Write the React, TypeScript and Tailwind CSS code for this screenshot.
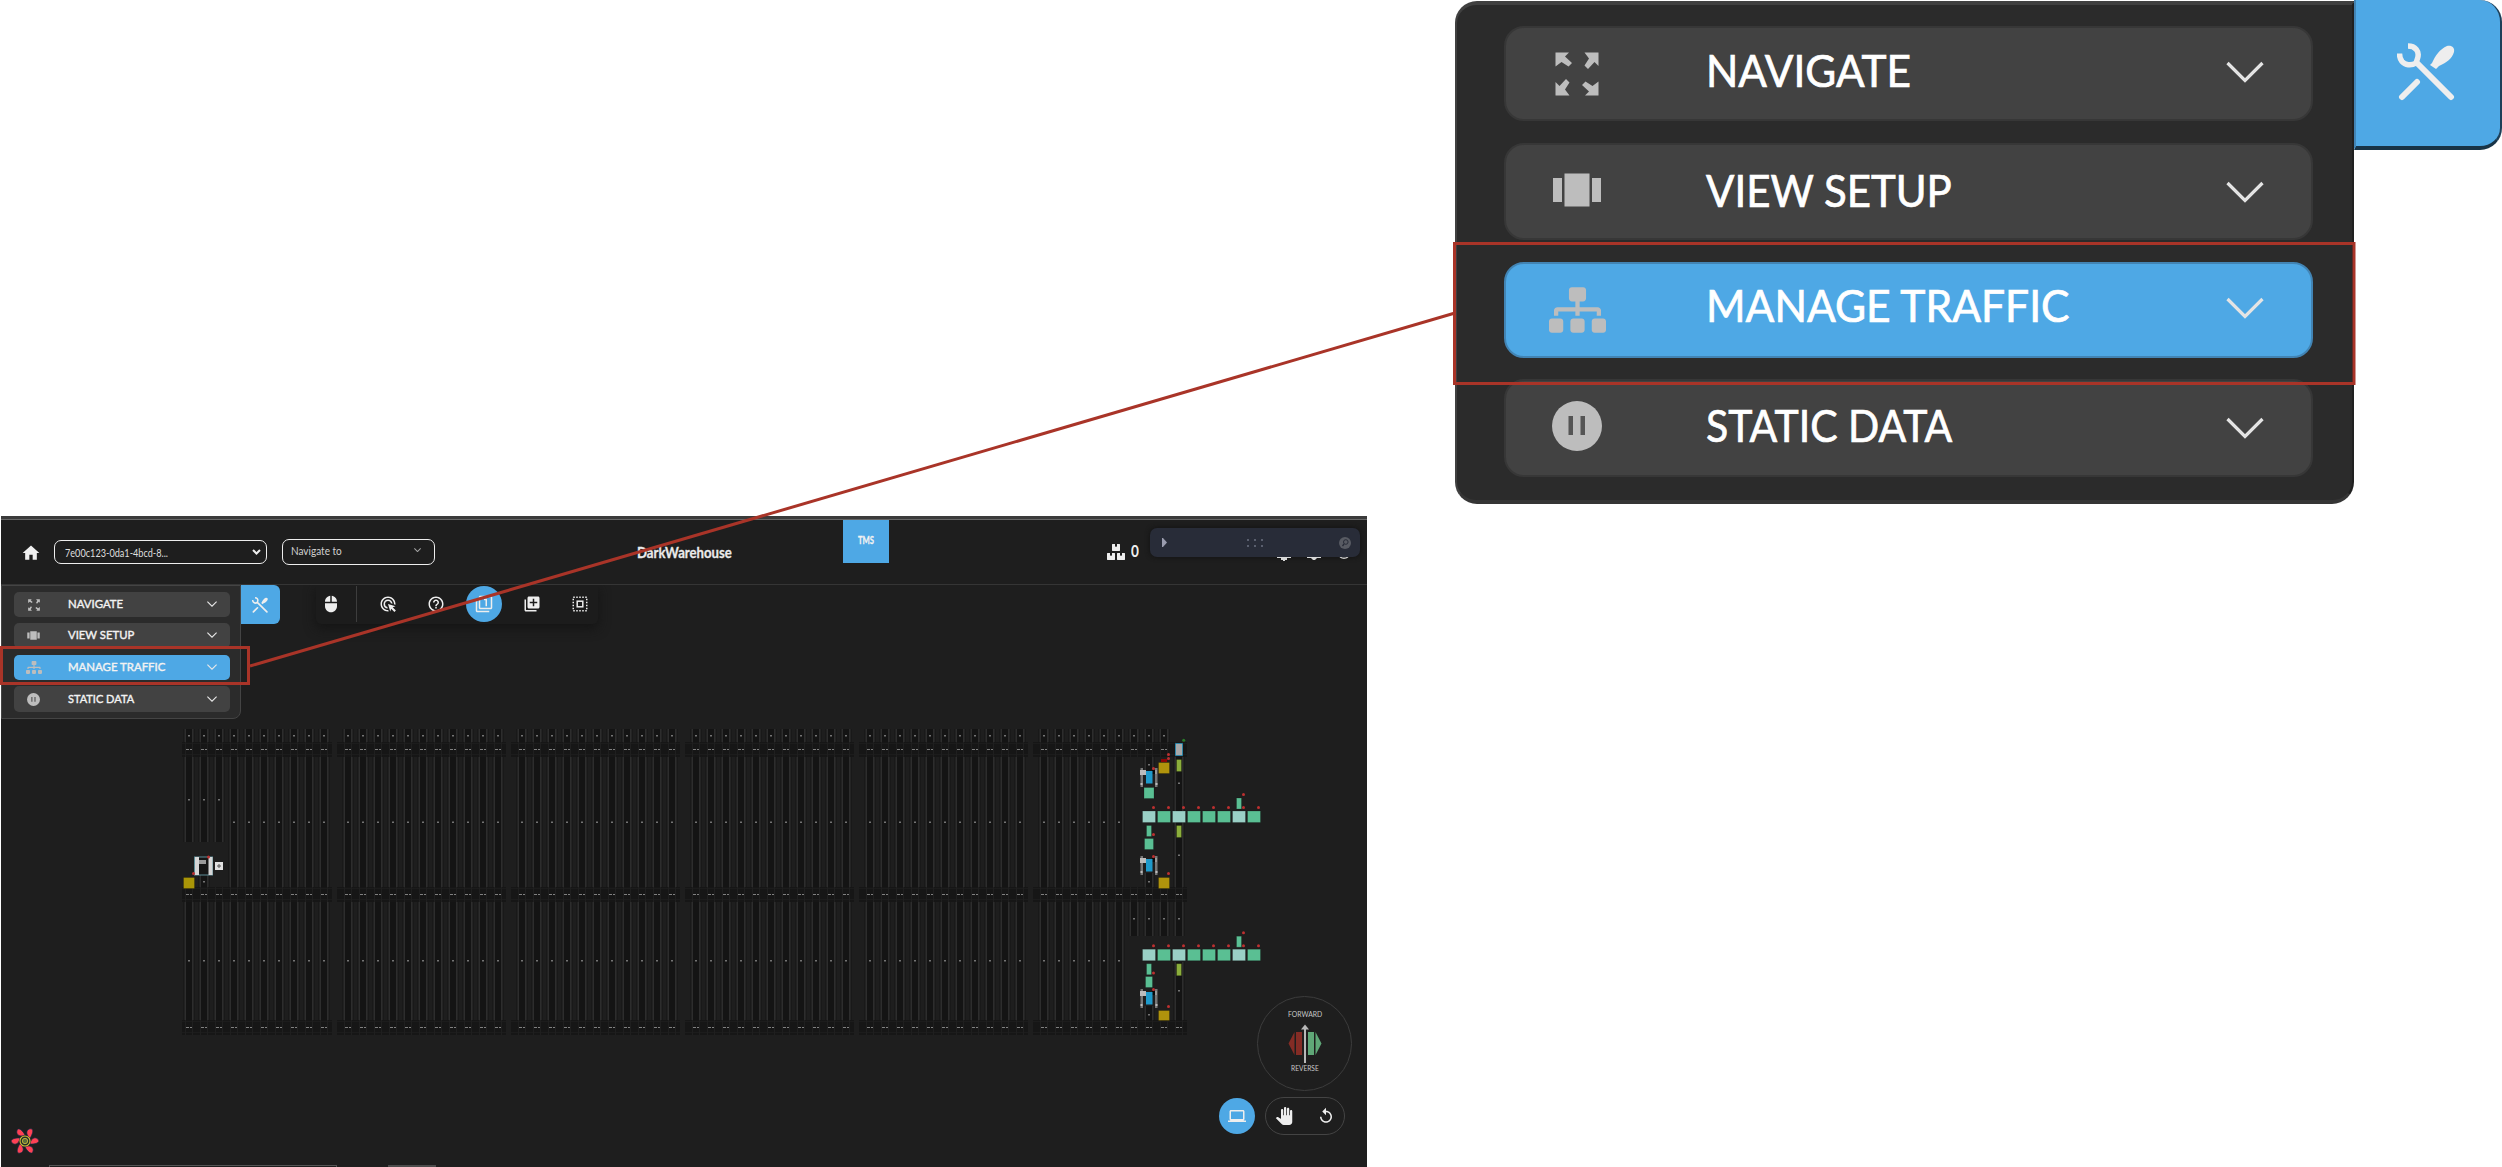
import React, { useLayoutEffect, useRef, useState } from "react";
import {
  MdAdsClick,
  MdHelpOutline,
  MdOutlineFilter1,
  MdLibraryAdd,
  MdMouse,
  MdHome,
  MdLaptop,
  MdPanTool,
  MdReplay,
} from "react-icons/md";
import { FaSitemap, FaBoxes } from "react-icons/fa";

/** Single-line text stretched horizontally to an exact width. */
function Fit({ width, className = "", children }: { width: number; className?: string; children: string }) {
  const ref = useRef<HTMLSpanElement>(null);
  const [scale, setScale] = useState(1);
  useLayoutEffect(() => {
    if (ref.current) setScale(width / ref.current.offsetWidth);
  }, [width]);
  return (
    <span className="flex shrink-0" style={{ width }}>
      <span
        ref={ref}
        className={`inline-block origin-left shrink-0 whitespace-nowrap leading-none ${className}`}
        style={{ transform: `scaleX(${scale})` }}
      >
        {children}
      </span>
    </span>
  );
}

function ExpandIcon({ className }: { className: string }) {
  return (
    <svg viewBox="0 0 44 44" className={className} fill="currentColor">
      {[0, 90, 180, 270].map((a) => (
        <path key={a} transform={`rotate(${a} 22 22)`} d="M0.500 0.500H14L10 4.500l7 6.500-3.500 3.500L6.500 10 0.500 14.500z" />
      ))}
    </svg>
  );
}

function CarouselIcon({ className }: { className: string }) {
  return (
    <svg viewBox="0 0 50 34" className={className} fill="currentColor">
      <path d="M1 5h9v24H1zM12.500 0.500h25v33h-25zM40 5h9v24h-9z" />
    </svg>
  );
}

function PauseIcon({ className }: { className: string }) {
  return (
    <svg viewBox="0 0 50 50" className={className}>
      <circle cx="25" cy="25" r="25" fill="currentColor" />
      <path d="M16.500 15h4.500v19h-4.500zM28.500 15H33v19h-4.500z" fill="#555555" />
    </svg>
  );
}

function ToolsIcon({ className }: { className: string }) {
  return (
    <svg viewBox="0 0 58 58" className={className} fill="none" stroke="currentColor" strokeLinecap="round">
      <path strokeWidth="6" d="M21 21L54 54M5 54L20 39" />
      <path strokeWidth="5.500" strokeLinecap="butt" strokeLinejoin="round" d="M11 3c7 0 12 5 9.500 12.500L19 20c-5 3-11 2-14-1.500-2-2.500-2.500-4-2.500-8" />
      <path fill="currentColor" stroke="none" d="M35 20c3-7 8-14 15-17 5-1 8 2 7 6-2 7-8 11-15 14l-3 3-6-4z" />
    </svg>
  );
}

/** Dashed selection square around a solid frame. */
function SelectIcon({ className }: { className: string }) {
  return (
    <svg viewBox="0 0 18 18" className={className} fill="none" stroke="currentColor">
      <rect x="2.250" y="2.250" width="13.500" height="13.500" strokeWidth="1.500" strokeDasharray="1.500 1.500" />
      <rect x="6.200" y="6.200" width="5.600" height="5.600" strokeWidth="1.500" />
    </svg>
  );
}

function Chevron({ className }: { className: string }) {
  return (
    <svg viewBox="0 0 38 22" className={className} fill="none" stroke="currentColor">
      <path vectorEffect="non-scaling-stroke" strokeWidth="1.100" d="M1.500 2L19 19.500L36.500 2" />
    </svg>
  );
}

function LargeChevron({ className }: { className: string }) {
  return (
    <svg viewBox="0 0 38 22" className={className} fill="none" stroke="currentColor" strokeWidth="3.200">
      <path d="M1.500 2L19 19.500L36.500 2" />
    </svg>
  );
}

type Item = { label: string; icon: "expand" | "carousel" | "sitemap" | "pause"; small: number; large: number; active?: boolean };
const items: Item[] = [
  { label: "NAVIGATE", icon: "expand", small: 55, large: 205 },
  { label: "VIEW SETUP", icon: "carousel", small: 66, large: 246 },
  { label: "MANAGE TRAFFIC", icon: "sitemap", small: 97, large: 364, active: true },
  { label: "STATIC DATA", icon: "pause", small: 66, large: 246 },
];

function ItemIcon({ icon, large }: { icon: Item["icon"]; large: boolean }) {
  if (icon === "expand") return <ExpandIcon className={large ? "size-[44px]" : "size-[12px]"} />;
  if (icon === "carousel") return <CarouselIcon className={large ? "mb-[4px] h-[34px] w-[50px]" : "h-[9px] w-[13px]"} />;
  if (icon === "sitemap") return <FaSitemap className={large ? "h-[48px] w-[57px]" : "h-[13px] w-[16px]"} />;
  return <PauseIcon className={large ? "mb-[4px] size-[50px]" : "size-[13px]"} />;
}

const largeHeights = ["h-[95px] mb-[22px]", "h-[97px] mb-[22px]", "h-[96px] mb-[21px]", "h-[98px]"];
const largeText = ["-mt-[8px]", "-mt-[4px]", "-mt-[10px]", "-mt-[6px]"];
const largeChevron = ["-mt-[4px]", "mt-0", "-mt-[5px]", "-mt-px"];

function LargeMenu() {
  return (
    <div className="flex h-[516px] items-start justify-end">
      <nav className="mt-px flex h-[503px] w-[899px] flex-col rounded-[22px] rounded-tr-none border-t-4 border-r-2 border-b-4 border-l-2 border-t-[#404040] border-r-[#202020] border-b-[#353535] border-l-[#404040] bg-[#2b2b2b] pt-[21px] pl-[47px]">
        {items.map((it, i) => (
          <div
            key={it.label}
            className={`flex w-[809px] shrink-0 items-center rounded-[20px] border-2 ${largeHeights[i]} ${
              it.active ? "border-[#4284b4] bg-[#4ea8e5]" : "border-[#373737] bg-[#424242]"
            }`}
          >
            <span className="ml-[41px] flex w-[60px] justify-center text-[#bdbdbd]">
              <ItemIcon icon={it.icon} large />
            </span>
            <span className={`ml-[99px] flex ${largeText[i]}`}>
              <Fit width={it.large} className="text-[44px] text-white [-webkit-text-stroke:0.700px_white]">
                {it.label}
              </Fit>
            </span>
            <LargeChevron className={`mr-[47px] ml-auto h-[22px] w-[38px] text-[#e4e4e4] ${largeChevron[i]}`} />
          </div>
        ))}
      </nav>
      <button className="flex h-[150px] w-[148px] items-center justify-center rounded-r-[22px] border-r-2 border-b-[4px] border-l-2 border-r-[#1d3f58] border-b-[#183447] border-l-[#4284b4] bg-[#4ea8e5] pr-[5px] pb-[2px] text-[#eeeeee]">
        <ToolsIcon className="size-[58px]" />
      </button>
    </div>
  );
}

const smallGaps = ["h-[25px] mb-[6px]", "h-[25px] mb-[7px]", "h-[25px] mb-[6px]", "h-[26px]"];

function SmallMenu() {
  return (
    <nav className="flex h-[134px] w-[240px] flex-col rounded-br-[8px] border border-[#444444] bg-[#2b2b2b] pt-[6px] pl-[12px]">
      {items.map((it, i) => (
        <div
          key={it.label}
          className={`flex w-[216px] shrink-0 items-center rounded-[5px] ${smallGaps[i]} ${it.active ? "bg-[#4ea8e5]" : "bg-[#424242]"}`}
        >
          <span className="ml-[11px] flex w-[17px] justify-center text-[#bdbdbd]">
            <ItemIcon icon={it.icon} large={false} />
          </span>
          <span className="ml-[26px] flex pb-[0.500px]">
            <Fit width={it.small} className="text-[12px] text-[#f2f2f2] [-webkit-text-stroke:0.400px_#f2f2f2]">
              {it.label}
            </Fit>
          </span>
          <Chevron className="mr-[13px] mb-px ml-auto h-[6px] w-[10px] text-[#e8e8e8]" />
        </div>
      ))}
    </nav>
  );
}

function Header() {
  return (
    <header className="flex h-[69px] items-start border-t-[3px] border-b border-t-[#3b3b3b] border-b-[#353535] shadow-[inset_0_1px_#666666]">
      <MdHome className="mt-[23px] ml-[20px] h-[22px] w-[20px] text-[#f0f0f0]" />
      <div className="mt-[21px] ml-[13px] flex h-[24px] w-[213px] items-center rounded-[7px] border border-[#eeeeee] pr-[5px] pl-[10px]">
        <Fit width={103} className="text-[11px] text-[#dedede]">
          7e00c123-0da1-4bcd-8...
        </Fit>
        <svg viewBox="0 0 9 6" className="ml-auto h-[6px] w-[9px]" fill="none" stroke="#eeeeee" strokeWidth="2">
          <path d="M1 1l3.500 3.500L8 1" />
        </svg>
      </div>
      <div className="mt-[20px] ml-[15px] flex h-[26px] w-[153px] items-center rounded-[7px] border border-[#eeeeee] pr-[13px] pb-[4px] pl-[8px]">
        <Fit width={51} className="text-[11px] text-[#d0d0d0]">
          Navigate to
        </Fit>
        <Chevron className="ml-auto h-[4px] w-[7px] text-[#a5a5a5]" />
      </div>
      <span className="mt-[26px] ml-[202px] flex">
        <Fit width={95} className="text-[15.500px] font-bold text-[#eaeaea] [-webkit-text-stroke:0.300px_#eaeaea]">
          DarkWarehouse
        </Fit>
      </span>
      <div className="mt-px ml-[111px] flex h-[43px] w-[46px] items-center justify-center bg-[#4ea8e5] pb-[3px]">
        <Fit width={16} className="text-[12px] font-bold text-[#f2f2f2] [-webkit-text-stroke:0.300px_#f2f2f2]">
          TMS
        </Fit>
      </div>
      <FaBoxes className="mt-[25px] ml-[218px] h-[16px] w-[18px] text-[#eeeeee]" />
      <span className="mt-[23px] ml-[6px] flex">
        <Fit width={8} className="text-[17px] font-bold text-[#eeeeee]">
          0
        </Fit>
      </span>
      <div className="mt-[9px] ml-[11px] flex w-[210px] flex-col">
        <div className="flex h-[29px] items-center rounded-[7px] bg-[#282c38] shadow-[0_0_5px_#111111]">
          <svg viewBox="0 0 5 9" className="ml-[12px] h-[9px] w-[5px]" fill="#9a9cae">
            <path d="M0 0h1l4 4.500L1 9H0z" />
          </svg>
          <div className="ml-[80px] grid grid-cols-3 gap-x-[5px] gap-y-[4px]">
            {[0, 1, 2, 3, 4, 5].map((n) => (
              <span key={n} className="size-[2px] bg-[#5a5f6e]" />
            ))}
          </div>
          <svg viewBox="0 0 12 12" className="mr-[9px] ml-auto size-[12px]">
            <circle cx="6" cy="6" r="6" fill="#585b63" />
            <circle cx="6.800" cy="5" r="2.300" fill="none" stroke="#282c38" />
            <path d="M5 7L3.500 9" stroke="#282c38" strokeWidth="1.300" />
          </svg>
        </div>
        <svg viewBox="0 0 210 4" className="h-[4px] w-[210px]" fill="#d8d8d8">
          <path d="M127 0h14v1h-14zM131 1h6v2h-2v1h-2V3h-2zM157 0h14v1h-14zM161 1h6l-2 2h-2z" />
          <path d="M190 0q4 2.500 8 0" fill="none" stroke="#cccccc" strokeWidth="1.400" />
        </svg>
      </div>
    </header>
  );
}

const groups = [
  { x: 189, n: 10, l: 182, r: 332 },
  { x: 348, n: 11, l: 337, r: 506 },
  { x: 522, n: 11, l: 511, r: 680 },
  { x: 696, n: 11, l: 685, r: 854 },
  { x: 870, n: 11, l: 859, r: 1028 },
  { x: 1044, n: 10, l: 1033, r: 1187 },
];

function Rail({ x, y, to, dots = [] }: { x: number; y: number; to: number; dots?: number[] }) {
  return (
    <g>
      <rect x={x - 6} y={y} width="12" height={to - y} fill="#191919" />
      <rect x={x - 4.5} y={y} width="1.600" height={to - y} fill="#2d2d2d" />
      <rect x={x + 3} y={y} width="1.600" height={to - y} fill="#2d2d2d" />
      <rect x={x - 2.9} y={y} width="5.900" height={to - y} fill="#141414" />
      {dots.map((d) => (
        <rect key={d} x={x - 1} y={d - 1} width="2" height="1.500" fill="#747474" />
      ))}
    </g>
  );
}

function Red({ x, y }: { x: number; y: number }) {
  return <circle cx={x} cy={y} r="1.500" fill="#bd3030" />;
}

function Box({ x, y, w, h = 12, c }: { x: number; y: number; w: number; h?: number; c: string }) {
  return <rect x={x + 0.5} y={y + 0.5} width={w - 1} height={h - 1} fill={c} stroke="#000000" strokeOpacity="0.200" />;
}

function Crane({ y }: { y: number }) {
  return (
    <g>
      <rect x="1140.500" y={y} width="2.500" height="19" fill="#777777" />
      <rect x="1155" y={y} width="2.500" height="19" fill="#777777" />
      <rect x="1140" y={y + 2} width="6" height="5" fill="#bcbcbc" />
      <rect x="1140.500" y={y + 15} width="2" height="2" fill="#bcbcbc" />
      <rect x="1155.500" y={y + 15} width="2" height="2" fill="#bcbcbc" />
      <rect x="1152" y={y + 2} width="5" height="4" fill="#080808" />
      <rect x="1155" y={y + 2} width="2" height="4" fill="#999999" />
      <rect x="1146" y={y + 3} width="6.500" height="12.500" fill="#1e9acb" />
      <Red x={1153.5} y={y + 0.5} />
    </g>
  );
}

function Conveyor({ y }: { y: number }) {
  return (
    <g>
      {[0, 1, 2, 3, 4, 5, 6, 7].map((i) => (
        <g key={i}>
          <Box x={1142 + 15 * i} y={y} w={14} h={12.5} c={i === 0 || i === 2 || i === 6 ? "#9ad0c6" : "#5abf93"} />
          <Red x={1153.5 + 15 * i} y={y - 3} />
        </g>
      ))}
      <Box x={1236} y={y - 13} w={6} c="#5abf93" />
      <Red x={1243.5} y={y - 16} />
      <Box x={1146} y={y + 14.5} w={6} c="#5abf93" />
      <Box x={1176} y={y + 14.5} w={6} h={13} c="#8bae3b" />
    </g>
  );
}

function WarehouseMap() {
  return (
    <svg viewBox="1 585 1366 582" className="absolute inset-0 h-[582px] w-[1366px]">
      {groups.map((g, gi) => (
        <g key={g.x}>
          {Array.from({ length: g.n }, (_, i) => {
            const x = g.x + 15 * i;
            if (gi === 5 && i > 5)
              return (
                <g key={x}>
                  {i < 9 && <Rail x={x} y={729} to={742} dots={[736]} />}
                  <Rail x={x} y={902} to={936} dots={[919]} />
                </g>
              );
            const cut = gi === 0 && i < 3;
            return (
              <g key={x}>
                <Rail x={x} y={729} to={742} dots={[736]} />
                <Rail x={x} y={757} to={cut ? 842 : 887} dots={[cut ? 800 : 822.5]} />
                <Rail x={x} y={902} to={1020} dots={[961]} />
              </g>
            );
          })}
          {[742, 887, 1020].map((y) => (
            <g key={y}>
              <rect x={g.l} y={y} width={g.r - g.l} height="15" fill="#161616" />
              <rect x={g.l} y={y + 1} width={g.r - g.l} height="1" fill="#1c1c1c" />
              <rect x={g.l} y={y + 12} width={g.r - g.l} height="1" fill="#1c1c1c" />
              {Array.from({ length: g.n }, (_, i) => {
                const x = g.x + 15 * i;
                return (
                  <g key={x}>
                    <path d={`M${x - 3.5} ${y}v15M${x + 3.5} ${y}v15`} stroke="#1f1f1f" />
                    <path d={`M${x - 3} ${y + 7.5}h3M${x + 1} ${y + 7.5}h2`} stroke="#808080" />
                  </g>
                );
              })}
            </g>
          ))}
        </g>
      ))}
      <Rail x={204} y={875} to={887} dots={[882]} />
      <Rail x={1179} y={757} to={887} dots={[783.5, 855.5]} />
      <Rail x={1179} y={962} to={1020} dots={[991]} />
      <Rail x={1149} y={757} to={771} dots={[765]} />
      <Rail x={1149} y={873} to={887} dots={[882]} />
      <Rail x={1149} y={1006} to={1020} dots={[1015]} />

      <rect x="194.500" y="857" width="18" height="18" fill="#161616" stroke="#5c8c96" />
      <rect x="195" y="857" width="4" height="18" fill="#d6d6d6" />
      <rect x="208.500" y="857" width="4" height="18" fill="#d6d6d6" />
      <rect x="199" y="860" width="7" height="4" fill="#9a9a9a" />
      <Red x={208.5} y={857} />
      <Red x={193.5} y={873.5} />
      <rect x="215" y="862" width="8" height="8" fill="#e2e2e2" />
      <path d="M219 864v4M217 866h4" stroke="#555555" />
      <Box x={183} y={877} w={12} c="#a99507" />

      <rect x="1176" y="744" width="6" height="12" fill="#a8a8a8" />
      <path d="M1175.500 743.500h7v12h-7z" fill="none" stroke="#2b86a8" />
      <circle cx="1183.700" cy="740.300" r="1.500" fill="#2a7a2a" />
      <Box x={1176} y={759} w={6} h={13} c="#8bae3b" />
      <rect x="1161" y="759" width="6" height="3" fill="#8c0505" />
      <Box x={1158} y={762} w={12} c="#b0930c" />
      <Red x={1168.5} y={754.5} />
      <Red x={1168.5} y={758.5} />
      <Crane y={768} />
      <Box x={1143.5} y={787} w={11} c="#5abf93" />
      <Conveyor y={810.5} />
      <Box x={1144} y={838} w={10} c="#5abf93" />
      <Red x={1153.5} y={834.5} />
      <Crane y={856} />
      <Box x={1158} y={877} w={12} c="#b0930c" />
      <Red x={1168.5} y={873.5} />
      <Conveyor y={948.7} />
      <Box x={1145} y={976} w={8} c="#5abf93" />
      <Red x={1153.5} y={973} />
      <Crane y={989} />
      <Box x={1158} y={1010} w={12} h={11} c="#b0930c" />
      <Red x={1168.5} y={1006.5} />
    </svg>
  );
}

function Toolbar() {
  return (
    <div className="ml-[36px] flex h-[39px] w-[282px] items-center rounded-b-[5px] bg-[#1c1c1c] pb-px text-[#eeeeee] shadow-[0_4px_12px_#141414]">
      <span className="flex w-[30px] justify-center">
        <MdMouse className="h-[20px] w-[18px]" />
      </span>
      <span className="ml-[10px] h-[36px] w-px bg-[#3d3d3d]" />
      <span className="ml-[22px] flex w-[18px] justify-center">
        <MdAdsClick className="size-[18px]" />
      </span>
      <span className="ml-[30px] flex w-[18px] justify-center">
        <MdHelpOutline className="size-[18px]" />
      </span>
      <span className="ml-[21px] flex size-[36px] items-center justify-center rounded-full bg-[#4ea8e5]">
        <MdOutlineFilter1 className="size-[18px]" />
      </span>
      <span className="ml-[21px] flex w-[18px] justify-center">
        <MdLibraryAdd className="size-[18px]" />
      </span>
      <span className="ml-[30px] flex w-[18px] justify-center">
        <SelectIcon className="size-[18px]" />
      </span>
    </div>
  );
}

function Flower() {
  return (
    <svg viewBox="-14 -14 28 28" className="size-[28px]">
      {[0, 60, 120, 180, 240, 300].map((a) => (
        <path
          key={a}
          transform={`rotate(${a})`}
          d="M5 3C5.500 0 7 -3 10 -3.200C12.500 -3 13.800 -1.200 13.800 0C13.500 2 10 3.200 5 3z"
          fill="#ff4154"
          stroke="#0b2b4a"
          strokeWidth="0.600"
        />
      ))}
      <circle r="5" fill="#1e2b2b" stroke="#d8c534" strokeWidth="1.100" />
      <circle r="2.700" fill="#5f7038" stroke="#c5b63a" strokeWidth="0.900" />
    </svg>
  );
}

function Compass() {
  return (
    <div className="flex h-[95px] w-[95px] flex-col items-center rounded-full border border-[#3c3c3c] pt-[13px] pl-px">
      <Fit width={34} className="text-[8px] text-[#c8c8c8]">
        FORWARD
      </Fit>
      <svg viewBox="0 0 34 40" className="mt-[6px] h-[40px] w-[34px]">
        <path d="M6.500 8v23L0.500 19.500z M8 8h6v23H8z" fill="#842c25" />
        <path d="M20 8h6v23h-6z M27.500 8v23l6-11.500z" fill="#5fa777" />
        <path d="M17 3v36" stroke="#b8b8b8" strokeWidth="2" />
        <path d="M17 0.500l4 5h-8z" fill="#b8b8b8" />
      </svg>
      <Fit width={28} className="text-[8px] text-[#c8c8c8]">
        REVERSE
      </Fit>
    </div>
  );
}

export default function App() {
  return (
    <div className="relative h-[1167px] w-[2502px] overflow-hidden bg-white font-['Lato',sans-serif]">
      <LargeMenu />
      <main className="ml-px flex h-[651px] w-[1366px] flex-col bg-[#1e1e1e]">
        <Header />
        <section className="relative h-[582px] overflow-hidden">
          <WarehouseMap />
          <div className="relative flex items-start">
            <SmallMenu />
            <button className="flex h-[39px] w-[39px] items-center justify-center rounded-r-[6px] bg-[#4ea8e5] pr-px text-[#eeeeee]">
              <ToolsIcon className="size-[16px]" />
            </button>
            <Toolbar />
          </div>
          <div className="absolute right-[15px] bottom-[32px] flex flex-col items-end gap-[6px]">
            <Compass />
            <div className="mr-[7px] flex items-center gap-[10px] text-[#eeeeee]">
              <span className="flex size-[36px] items-center justify-center rounded-full bg-[#4ea8e5]">
                <MdLaptop className="size-[18px]" />
              </span>
              <span className="flex h-[38px] w-[80px] items-center justify-between rounded-full border border-[#444444] px-[9px]">
                <MdPanTool className="h-[18px] w-[18px]" />
                <MdReplay className="size-[18px]" />
              </span>
            </div>
          </div>
          <div className="absolute bottom-[12px] left-[10px]">
            <Flower />
          </div>
          <div className="absolute bottom-0 left-[48px] h-[2px] w-[288px] border-x border-t border-[#555555]" />
          <div className="absolute bottom-0 left-[387px] h-[2px] w-[48px] bg-[#4c4c4c]" />
        </section>
      </main>
      <svg viewBox="0 0 2502 1167" className="pointer-events-none absolute inset-0 h-[1167px] w-[2502px]" fill="none" stroke="#a93428">
        <rect x="1.500" y="647.500" width="247" height="36" strokeWidth="3" />
        <path d="M250 666L1455 313" strokeWidth="3" />
        <rect x="1454.500" y="243.500" width="899.500" height="140" strokeWidth="3" />
      </svg>
    </div>
  );
}
